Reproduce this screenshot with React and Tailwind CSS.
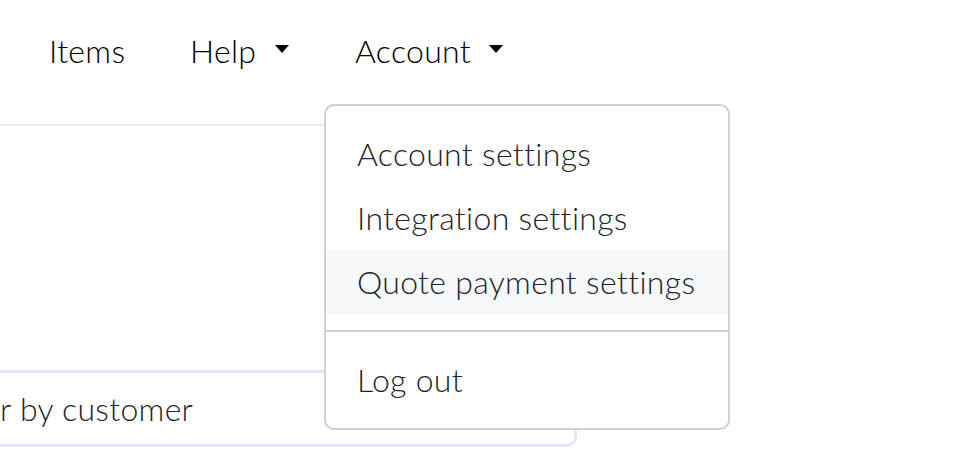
export default function App() {
  const menu = ['Account settings', 'Integration settings', 'Quote payment settings'];

  return (
    <div className="relative w-[960px] h-[450px] overflow-hidden bg-white font-light tracking-[0.3px] text-[#212529]" style={{ fontFamily: "Lato, 'Noto Sans', sans-serif" }}>
      {/* top nav */}
      <nav className="flex items-center pl-[49px] pt-[27px] text-[32px] leading-[48px] text-black">
        <span className="w-[141px] whitespace-nowrap">Items</span>
        <span className="flex w-[165px] items-center whitespace-nowrap">
          <span className="w-[65px]">Help</span>
          <span className="ml-[20px] -mt-[4px] h-0 w-0 border-x-[7.5px] border-t-[8px] border-x-transparent border-t-black" />
        </span>
        <span className="flex items-center whitespace-nowrap">
          <span className="w-[117px]">Account</span>
          <span className="ml-[17px] -mt-[4px] h-0 w-0 border-x-[7.5px] border-t-[8px] border-x-transparent border-t-black" />
        </span>
      </nav>

      {/* page card behind the menu */}
      <div className="mt-[49px] h-[2px] w-[577px] bg-[#ececec]" />
      <div className="mt-[244px] -ml-[12px] flex h-[77px] w-[589px] items-center rounded-[10px] border-[3px] border-[#e6e3f7] pl-[9px] text-[32px]">
        <span className="whitespace-nowrap">r by customer</span>
      </div>

      {/* account dropdown */}
      <div className="absolute left-[324px] top-[104px] w-[406px] rounded-[10px] border-2 border-[#d0d0d0] bg-white py-[16px] text-[32px] leading-[48px]">
        {menu.map((label, i) => (
          <div key={label} className={`px-[31px] py-[8px] whitespace-nowrap ${i === 2 ? 'bg-[#f7f8fa]' : ''}`}>
            {label}
          </div>
        ))}
        <div className="my-[16px] h-[2px] bg-[#d0d0d0]" />
        <div className="px-[31px] py-[8px] whitespace-nowrap">Log out</div>
      </div>
    </div>
  );
}
